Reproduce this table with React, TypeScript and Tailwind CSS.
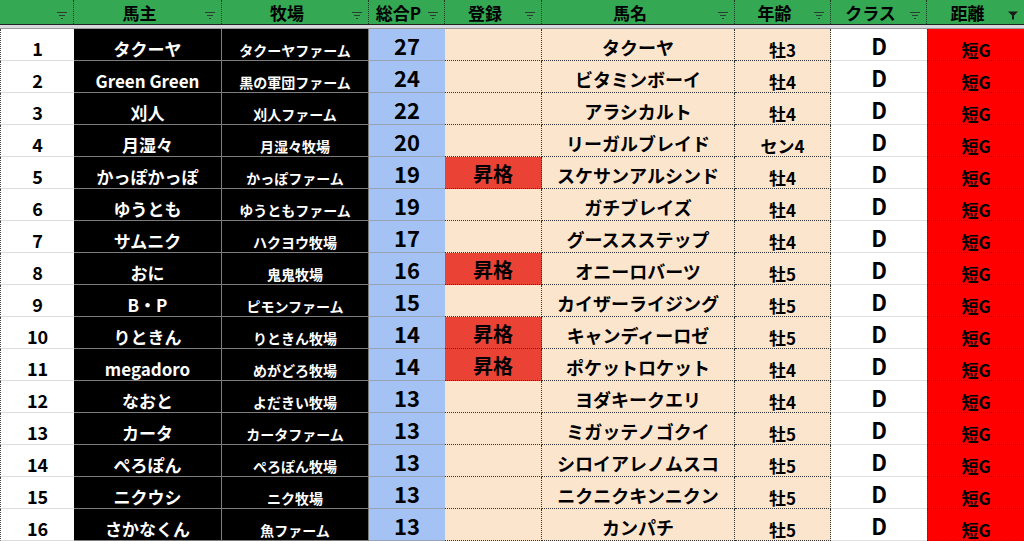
const rows = [
  { no: 1, owner: "タクーヤ", farm: "タクーヤファーム", pts: 27, reg: "", horse: "タクーヤ", age: "牡3" },
  { no: 2, owner: "Green Green", farm: "黒の軍団ファーム", pts: 24, reg: "", horse: "ビタミンボーイ", age: "牡4" },
  { no: 3, owner: "刈人", farm: "刈人ファーム", pts: 22, reg: "", horse: "アラシカルト", age: "牡4" },
  { no: 4, owner: "月湿々", farm: "月湿々牧場", pts: 20, reg: "", horse: "リーガルブレイド", age: "セン4" },
  { no: 5, owner: "かっぽかっぽ", farm: "かっぽファーム", pts: 19, reg: "昇格", horse: "スケサンアルシンド", age: "牡4" },
  { no: 6, owner: "ゆうとも", farm: "ゆうともファーム", pts: 19, reg: "", horse: "ガチブレイズ", age: "牡4" },
  { no: 7, owner: "サムニク", farm: "ハクヨウ牧場", pts: 17, reg: "", horse: "グーススステップ", age: "牡4" },
  { no: 8, owner: "おに", farm: "鬼鬼牧場", pts: 16, reg: "昇格", horse: "オニーロバーツ", age: "牡5" },
  { no: 9, owner: "B・P", farm: "ピモンファーム", pts: 15, reg: "", horse: "カイザーライジング", age: "牡5" },
  { no: 10, owner: "りときん", farm: "りときん牧場", pts: 14, reg: "昇格", horse: "キャンディーロゼ", age: "牡5" },
  { no: 11, owner: "megadoro", farm: "めがどろ牧場", pts: 14, reg: "昇格", horse: "ポケットロケット", age: "牡4" },
  { no: 12, owner: "なおと", farm: "よだきい牧場", pts: 13, reg: "", horse: "ヨダキークエリ", age: "牡4" },
  { no: 13, owner: "カータ", farm: "カータファーム", pts: 13, reg: "", horse: "ミガッテノゴクイ", age: "牡5" },
  { no: 14, owner: "ぺろぽん", farm: "ぺろぽん牧場", pts: 13, reg: "", horse: "シロイアレノムスコ", age: "牡5" },
  { no: 15, owner: "ニクウシ", farm: "ニク牧場", pts: 13, reg: "", horse: "ニクニクキンニクン", age: "牡5" },
  { no: 16, owner: "さかなくん", farm: "魚ファーム", pts: 13, reg: "", horse: "カンパチ", age: "牡5" },
];

const headers = ["", "馬主", "牧場", "総合P", "登録", "馬名", "年齢", "クラス", "距離"];

const cols = "grid grid-cols-[74px_148px_147px_76px_97px_193px_96px_96px_97px] grid-rows-[32px]";
const cell = "flex items-center justify-center leading-none overflow-hidden whitespace-nowrap";

function FilterIcon({ active }: { active?: boolean }) {
  if (active) {
    return (
      <svg width="10" height="9" viewBox="0 0 10 9" className="mr-[6px] mt-[7px] shrink-0">
        <path d="M0 0.5 H10 L6 4.5 V8.5 H4 V4.5 Z" fill="#1a1a1a" />
      </svg>
    );
  }
  return (
    <svg width="10" height="8" viewBox="0 0 10 8" className="mr-[6px] mt-[6px] shrink-0">
      <path d="M0 1.5 H10 M2 4.5 H8 M4 7.5 H6" stroke="#2d3b31" strokeWidth="1" />
    </svg>
  );
}

export default function App() {
  return (
    <div className="w-[1024px] h-[541px] overflow-hidden bg-white font-['Noto_Sans_CJK_JP',sans-serif] font-bold">
      {/* header */}
      <div className="grid grid-cols-[74px_148px_147px_76px_97px_193px_96px_96px_97px] grid-rows-[24px] bg-[#34a853]">
        {headers.map((h, i) => (
          <div
            key={i}
            className={`flex items-center ${i < 8 ? "[border-right:1px_dotted_#1d3d26]" : ""}`}
          >
            <span className="flex-1 text-center text-[17px] leading-none text-black">{h}</span>
            <FilterIcon active={i === 8} />
          </div>
        ))}
      </div>
      <div className="h-px bg-[#222]" />
      <div className="h-[3px] bg-[#d6d9dd]" />
      <div className="h-px bg-[#9a9a9a]" />

      {/* rows */}
      {rows.map((r) => (
        <div key={r.no} className={cols}>
          <div className={`${cell} pt-[7px] bg-white [border-bottom:1px_solid_#dcdcdc] [border-left:1px_dotted_#444] text-[18px] text-black`}>
            {r.no}
          </div>
          <div className={`${cell} pt-[7px] bg-black [border-bottom:1px_solid_#7d7d7d] [border-right:1px_solid_#7d7d7d] text-[17px] text-white`}>
            {r.owner}
          </div>
          <div className={`${cell} pt-[10px] bg-black [border-bottom:1px_solid_#7d7d7d] [border-right:1px_solid_#7d7d7d] text-[14px] text-white`}>
            {r.farm}
          </div>
          <div className={`${cell} pt-0 bg-[#a4c2f4] [border-bottom:1px_solid_#98a4b8] text-[22px] text-black`}>
            {r.pts}
          </div>
          <div
            className={`${cell} pt-[3px] [border-bottom:1px_dotted_#333] [border-right:1px_dotted_#333] text-[20px] text-black ${
              r.reg ? "bg-[#ea4335]" : "bg-[#fce5cd]"
            }`}
          >
            {r.reg}
          </div>
          <div className={`${cell} pt-[5px] bg-[#fce5cd] [border-bottom:1px_dotted_#333] [border-right:1px_dotted_#333] text-[18px] text-black`}>
            {r.horse}
          </div>
          <div className={`${cell} pt-[9px] bg-[#fce5cd] [border-bottom:1px_dotted_#333] [border-right:1px_dotted_#333] text-[17px] text-black`}>
            {r.age}
          </div>
          <div className={`${cell} pt-[1px] bg-white [border-bottom:1px_solid_#e0e0e0] text-[22px] text-black`}>
            D
          </div>
          <div className={`${cell} pt-[10px] bg-[#ff0000] [border-bottom:1px_dotted_#333] [border-left:1px_dotted_#333] text-[17px] text-black`}>
            短G
          </div>
        </div>
      ))}
    </div>
  );
}
